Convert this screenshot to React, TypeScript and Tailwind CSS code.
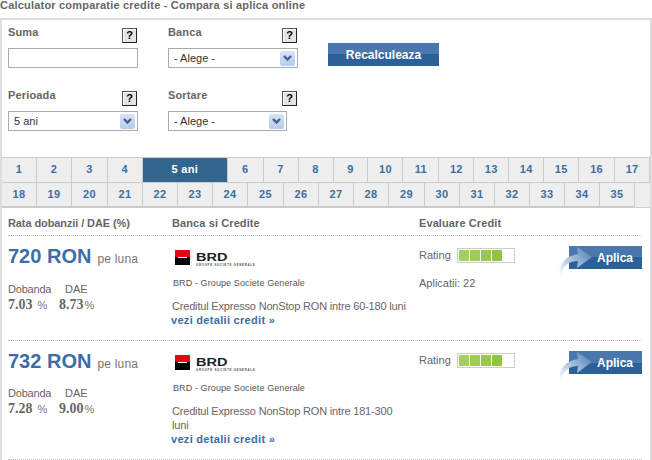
import React from 'react';

const row1: [string, boolean][] = [
    ['1', false], ['2', false], ['3', true], ['4', false], ['5 ani', false], ['6', true], ['7', false], ['8', false], ['9', false],
    ['10', false], ['11', true], ['12', false], ['13', false], ['14', false], ['15', false], ['16', true], ['17', false],
];
const row2: [string, boolean][] = [
    ['18', false], ['19', false], ['20', true], ['21', false], ['22', false], ['23', false], ['24', false], ['25', true], ['26', false],
    ['27', false], ['28', false], ['29', true], ['30', false], ['31', false], ['32', false], ['33', false], ['34', false], ['35', false],
];

const Help: React.FC = () => (
    <span className="w-[15px] h-[15px] border border-[#555] border-r-[#222] border-b-[#222] bg-[#e4e4e4] shadow-[inset_1px_1px_0_#fff] flex items-center justify-center text-[11px] font-bold leading-none text-black">?</span>
);

const Label: React.FC<{ text: string }> = ({ text }) => (
    <div className="h-[20px] flex justify-between items-start pr-[1px]">
        <span className="text-[11px] leading-[10px] -mt-[1px] font-bold text-[#666] tracking-[0.15px]">{text}</span>
        <Help />
    </div>
);

const Select: React.FC<{ value: string; width: string }> = ({ value, width }) => (
    <div className={`${width} h-[20px] border border-[#aaa] flex items-center justify-between pl-[5px] pr-[2px] text-[11px] text-[#333]`}>
        <span>{value}</span>
        <span className="w-[15px] h-[15px] rounded-[2px] bg-gradient-to-b from-[#d6e4f7] to-[#b4ccee] flex items-center justify-center">
            <svg width="9" height="6" viewBox="0 0 9 6">
                <path d="M1 1 L4.5 4.5 L8 1" fill="none" stroke="#4a5f85" strokeWidth="2.4" />
            </svg>
        </span>
    </div>
);

const BlueButton: React.FC<{ text: string; className: string }> = ({ text, className }) => (
    <div className={`${className} bg-gradient-to-b from-[#4a78ae] from-50% to-[#2c6098] to-50% flex items-center text-white font-bold text-[12px]`}>
        {text}
    </div>
);

const Tab: React.FC<{ label: string; wide: boolean }> = ({ label, wide }) => {
    if (label === '5 ani') {
        return <div className="w-[85px] border-r border-[#ccc] bg-[#33668f] text-white flex items-center justify-center">{label}</div>;
    }
    return <div className={`${wide ? 'w-[36px]' : 'w-[35px]'} border-r border-[#ccc] flex items-center justify-center`}>{label}</div>;
};

const BrdLogo: React.FC = () => (
    <div className="flex items-start gap-[6px] h-[15px] ml-[3px]">
        <div className="w-[15px] h-[15px] bg-black flex flex-col">
            <div className="h-[7px] bg-[#e30613]" />
            <div className="h-[1px] bg-white mx-[3px]" />
        </div>
        <div className="flex flex-col mt-[3px]">
            <span className="text-[11px] leading-[9px] font-bold text-[#222] scale-x-[1.32] origin-left">BRD</span>
            <span className="text-[3px] leading-[4px] text-[#555] whitespace-nowrap font-bold tracking-[0.65px] mt-[1px]">GROUPE SOCIETE GENERALE</span>
        </div>
    </div>
);

const Credit: React.FC<{ suma: string; dob: string; dae: string; name: React.ReactNode; aplicatii?: string; height: string; stats: string }> = ({ suma, dob, dae, name, aplicatii, height, stats }) => (
    <div className={`flex ${height} ml-[6px] mr-[8px]`}>
        <div className="w-[162px] border-b border-dotted border-[#bbb] mr-[1px]">
            <div className="flex items-baseline mt-[8px] leading-[24px]">
                <span className="text-[20px] font-bold text-[#3b6ea5]">{suma} RON</span>
                <span className="text-[12px] text-[#777] ml-[6px] tracking-[0.2px]">pe luna</span>
            </div>
            <div className={`${stats} flex gap-[15px] text-[11px] leading-[14px] text-[#666]`}>
                <span className="w-[42px] tracking-[-0.2px]">Dobanda</span>
                <span>DAE</span>
            </div>
            <div className="flex text-[11px] leading-[16px] text-[#777] mt-[1px]">
                <span className="w-[51px]"><b className="font-bold [font-family:'Liberation_Serif',serif] text-[14px] text-[#666]">{dob}</b> <span className="ml-[2px]">%</span></span>
                <span><b className="font-bold [font-family:'Liberation_Serif',serif] text-[14px] text-[#666]">{dae}</b><span className="ml-[1px]">%</span></span>
            </div>
        </div>
        <div className="flex-1 border-b border-dotted border-[#bbb] flex">
            <div className="w-[248px] pl-[1px] pt-[14px]">
                <BrdLogo />
                <div className="text-[9px] leading-[12px] text-[#555] tracking-[0.1px] mt-[12px] ml-[1px]">BRD - Groupe Societe Generale</div>
                <div className="text-[11px] leading-[14px] text-[#666] mt-[10px] w-[238px] tracking-[-0.18px]">{name}</div>
                <div className="text-[11px] leading-[15px] -ml-[1px] font-bold text-[#3b6ea5] tracking-[0.3px]">vezi detalii credit »</div>
            </div>
            <div className="w-[150px] pt-[12px]">
                <div className="flex items-center text-[11px] leading-[13px] text-[#666]">
                    <span className="w-[38px] -mt-[1px]">Rating</span>
                    <div className="w-[58px] h-[15px] border border-[#ccc] p-[1px] flex gap-[1px]">
                        <div className="w-[10px] bg-[#a5cf64]" />
                        <div className="w-[10px] bg-[#9dcb57]" />
                        <div className="w-[10px] bg-[#97c74c]" />
                        <div className="w-[10px] bg-[#8fc343]" />
                    </div>
                </div>
                {aplicatii && <div className="text-[11px] leading-[13px] text-[#666] mt-[14px]">Aplicatii: {aplicatii}</div>}
            </div>
            <div className="relative flex-1 pt-[10px]">
                <BlueButton text="Aplica" className="w-[73px] h-[23px] justify-end pr-[9px]" />
                <svg className="absolute left-[-12px] top-[11px]" width="36" height="28" viewBox="0 0 36 28">
                    <defs>
                        <linearGradient id="arrowFade" x1="0" y1="1" x2="1" y2="0.3">
                            <stop offset="0" stopColor="#ffffff" />
                            <stop offset="0.5" stopColor="#a9c2de" />
                            <stop offset="1" stopColor="#5f8aba" />
                        </linearGradient>
                    </defs>
                    <path d="M2 28 C2 16 9 9 21 7 L20 0 L35 10 L20 21 L21 14 C13 14 6 18 4 28 Z" fill="url(#arrowFade)" />
                </svg>
            </div>
        </div>
    </div>
);

export default function App() {
    return (
        <div className="w-[652px] h-[460px] bg-white overflow-hidden font-['Liberation_Sans',Arial,sans-serif]">
            <div className="h-[18px] text-[11px] leading-[11px] font-bold text-[#666] tracking-[0.2px] whitespace-nowrap">
                Calculator comparatie credite - Compara si aplica online
            </div>
            <div className="w-[652px] h-[442px] border-t-2 border-x-2 border-[#ddd]">
                <div className="h-[137px] pt-[8px] pl-[6px] grid grid-cols-[130px_130px_111px] grid-rows-[43px_40px] gap-x-[30px] gap-y-[20px] content-start">
                    <div>
                        <Label text="Suma" />
                        <div className="w-[130px] h-[20px] border border-[#aaa]" />
                    </div>
                    <div>
                        <Label text="Banca" />
                        <Select value="- Alege -" width="w-[130px]" />
                    </div>
                    <BlueButton text="Recalculeaza" className="mt-[15px] w-[111px] h-[23px] justify-center" />
                    <div>
                        <Label text="Perioada" />
                        <Select value="5 ani" width="w-[130px]" />
                    </div>
                    <div>
                        <Label text="Sortare" />
                        <Select value="- Alege -" width="w-[119px]" />
                    </div>
                </div>
                <div className="text-[11px] font-bold text-[#3b6ea5] tracking-[0.3px] bg-[#eee]">
                    <div className="flex h-[26px] border-y border-[#ccc] [&>div]:pb-[1px]">
                        {row1.map(([label, wide]) => <Tab key={label} label={label} wide={wide} />)}
                    </div>
                    <div className="h-[25px] border-b border-[#ccc]">
                        <div className="flex h-[25px] w-[633px] border-b-2 border-[#ccc]">
                            {row2.map(([label, wide]) => <Tab key={label} label={label} wide={wide} />)}
                        </div>
                    </div>
                </div>
                <div className="flex h-[27px] mx-[6px] w-[634px] items-center pt-[3px] text-[11px] font-bold text-[#666] tracking-[0.1px]">
                    <div className="w-[163px] tracking-[-0.1px]">Rata dobanzii / DAE (%)</div>
                    <div className="w-[248px] pl-[1px]">Banca si Credite</div>
                    <div>Evaluare Credit</div>
                </div>
                <div className="h-[1px] mx-[6px] mr-[8px] border-b border-dotted border-[#bbb]" />
                <Credit suma="720" dob="7.03" dae="8.73" name="Creditul Expresso NonStop RON intre 60-180 luni" aplicatii="22" height="h-[105px]" stats="mt-[11px]" />
                <Credit suma="732" dob="7.28" dae="9.00" name="Creditul Expresso NonStop RON intre 181-300 luni" height="h-[119px]" stats="mt-[10px]" />
            </div>
        </div>
    );
}
